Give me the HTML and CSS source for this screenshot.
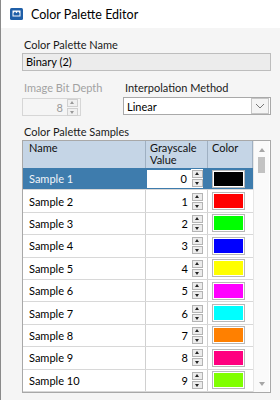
FILE: index.html
```html
<!DOCTYPE html>
<html lang="en">
<head>
    <meta charset="UTF-8">
    <title>Color Palette Editor</title>
    <link rel="stylesheet" href="styles.css">
</head>
<body>
    <div class="window">
        <div class="titlebar">
            <svg class="app-icon" width="13" height="12" viewBox="0 0 13 12">
                <rect x="0" y="0" width="13" height="12" rx="1.5" fill="#1f5fa8"/>
                <rect x="2.5" y="2.5" width="8" height="6" fill="#fff"/>
                <path d="M3.5 7.5 L3.5 5 L5 3.5 L6.5 5.2 L8 3.5 L9.5 5 L9.5 7.5 Z" fill="#1f5fa8"/>
            </svg>
            <span class="title">Color Palette Editor</span>
        </div>

        <div class="content">
            <div class="label">Color Palette Name</div>
            <div class="textbox readonly">Binary (2)</div>

            <div class="pair">
                <div class="bitdepth disabled">
                    <div class="label">Image Bit Depth</div>
                    <div class="numbox">
                        <span class="num">8</span>
                        <span class="spin"><span class="up"></span><span class="down"></span></span>
                    </div>
                </div>
                <div class="interp">
                    <div class="label">Interpolation Method</div>
                    <div class="select">
                        <span>Linear</span>
                        <span class="drop">
                            <svg width="10" height="6" viewBox="0 0 10 6"><path d="M1 1 L5 5 L9 1" fill="none" stroke="#777" stroke-width="1"/></svg>
                        </span>
                    </div>
                </div>
            </div>

            <div class="label samples-label">Color Palette Samples</div>
            <div class="grid">
                <div class="grid-main">
                    <div class="row head">
                        <div class="cell name">Name</div>
                        <div class="cell value"><span>Grayscale</span><span>Value</span></div>
                        <div class="cell color">Color</div>
                    </div>
                    <div id="rows"></div>
                </div>
                <div class="scrollbar">
                    <span class="arrow-up"></span>
                    <span class="thumb"></span>
                    <span class="fill"></span>
                    <span class="arrow-down"></span>
                </div>
            </div>
        </div>
    </div>

    <script>
        // sample colours, grayscale value = index
        const samples = [
            '#000000', '#ff0000', '#00ff00', '#0000ff', '#ffff00',
            '#ff00ff', '#00ffff', '#ff8000', '#ff0080', '#80ff00'
        ];

        const rows = document.getElementById('rows');
        samples.forEach((color, i) => {
            const row = document.createElement('div');
            row.className = 'row' + (i === 0 ? ' selected' : '');
            row.innerHTML =
                '<div class="cell name">Sample ' + (i + 1) + '</div>' +
                '<div class="cell value"><span class="num">' + i + '</span>' +
                '<span class="spin"><span class="up"></span><span class="down"></span></span></div>' +
                '<div class="cell color"><span class="swatch"><span class="fillc" style="background:' + color + '"></span></span></div>';
            rows.appendChild(row);
        });
    </script>
</body>
</html>
```

FILE: styles.css
```css
body {
    margin: 0;
    font-family: 'Segoe UI', 'Lato', 'Liberation Sans', sans-serif;
    font-size: 11px;
    color: #000;
    background: #f5f5f5;
}

.window {
    width: 279px;
    height: 400px;
    border-left: 1px solid #8a8a8a;
    background: #f5f5f5;
    overflow: hidden;
}

.titlebar {
    height: 28px;
    background: #fff;
    display: flex;
    align-items: center;
    padding-left: 9px;
}

.app-icon {
    margin-right: 8px;
}

.title {
    font-size: 12.5px;
}

.content {
    padding: 9px 9px 0 21px;
}

.label {
    height: 16px;
    line-height: 16px;
    padding-left: 2px;
    color: #1a1a1a;
}

.textbox {
    height: 16px;
    line-height: 16px;
    border: 1px solid #bdbdbd;
    padding: 0 3px;
}

.readonly {
    background: #ececec;
}

.pair {
    display: flex;
    gap: 42px;
    margin-top: 9px;
}

.bitdepth {
    width: 59px;
}

.disabled .label {
    color: #a2a2a2;
    white-space: nowrap;
}

.numbox {
    margin-top: 2px;
    height: 16px;
    border: 1px solid #d6d6d6;
    display: flex;
    align-items: center;
    justify-content: flex-end;
    padding-right: 2px;
}

.disabled .num {
    color: #9a9a9a;
    margin-right: 4px;
}

.interp {
    flex: 1;
}

.select {
    margin-top: 1px;
    height: 16px;
    border: 1px solid #a9a9a9;
    background: #fff;
    display: flex;
    align-items: center;
    justify-content: space-between;
    padding-left: 3px;
}

.drop {
    width: 16px;
    height: 14px;
    margin-right: 1px;
    border: 1px solid #c6c6c6;
    background: #f4f4f4;
    display: flex;
    align-items: center;
    justify-content: center;
}

.samples-label {
    margin-top: 8px;
}

/* grid */
.grid {
    display: flex;
    border: 1px solid #a8a8a8;
    background: #fff;
}

.grid-main {
    width: 230px;
}

.row {
    display: flex;
    height: 22.4px;
    border-bottom: 1px solid #d8d8d8;
    box-sizing: border-box;
}

.row.head {
    height: 27px;
    background: #c5d5e6;
    border-bottom: none;
}

.cell {
    box-sizing: border-box;
    border-right: 1px solid #d0d0d0;
    display: flex;
    align-items: center;
}

.head .cell {
    align-items: flex-start;
    padding-top: 1px;
    line-height: 12px;
    border-right-color: #9fb0c2;
    color: #111;
}

.cell.name {
    width: 123px;
    padding-left: 6px;
}

.cell.value {
    width: 62px;
    justify-content: flex-end;
    padding-right: 4px;
}

.head .cell.value {
    flex-direction: column;
    justify-content: flex-start;
    padding-left: 4px;
}

.cell.color {
    width: 45px;
    padding-left: 4px;
    border-right: none;
}

.head .cell.color {
    border-right: 1px solid #9fb0c2;
}

.cell.value .num {
    margin-right: 4px;
}

.selected {
    background: #3e7cad;
}

.selected .cell {
    border-right-color: #3e7cad;
}

.selected .cell.name {
    color: #f0f4f8;
}

.selected .cell.value {
    padding: 0 4px 0 1px;
}

.selected .cell.value .num {
    flex: 1;
    height: 18px;
    line-height: 18px;
    background: #fff;
    text-align: right;
    padding-right: 4px;
    margin-right: 0;
}

.selected .cell.value .spin {
    background: #fff;
    padding: 1px 0 1px 1px;
}

.spin {
    display: flex;
    flex-direction: column;
    gap: 1px;
}

.spin .up,
.spin .down {
    width: 9px;
    height: 6px;
    border: 1px solid #b4b4b4;
    background: #ececec;
    position: relative;
}

.spin .up::after,
.spin .down::after {
    content: "";
    position: absolute;
    left: 2px;
    border-left: 2.5px solid transparent;
    border-right: 2.5px solid transparent;
}

.spin .up::after {
    top: 1px;
    border-bottom: 3px solid #222;
}

.spin .down::after {
    top: 2px;
    border-top: 3px solid #222;
}

.disabled .spin .up::after {
    border-bottom-color: #999;
}

.disabled .spin .down::after {
    border-top-color: #999;
}

.disabled .spin .up,
.disabled .spin .down {
    border-color: #d0d0d0;
    background: #f0f0f0;
}

.swatch {
    width: 33px;
    height: 18px;
    box-sizing: border-box;
    border: 1px solid #b8b8b8;
    background: #fff;
    padding: 1px;
    display: block;
}

.fillc {
    display: block;
    width: 100%;
    height: 100%;
}

.scrollbar {
    width: 15px;
    border-left: 1px solid #e6e6e6;
    background: #fafafa;
    display: flex;
    flex-direction: column;
    align-items: center;
}

.arrow-up,
.arrow-down {
    width: 0;
    height: 0;
    border-left: 3.5px solid transparent;
    border-right: 3.5px solid transparent;
}

.arrow-up {
    margin-top: 7px;
    border-bottom: 4px solid #a6a6a6;
}

.arrow-down {
    margin-bottom: 6px;
    border-top: 4px solid #a6a6a6;
}

.thumb {
    width: 7px;
    height: 16px;
    margin-top: 5px;
    background: #c2c2c2;
}

.fill {
    flex: 1;
}
```
